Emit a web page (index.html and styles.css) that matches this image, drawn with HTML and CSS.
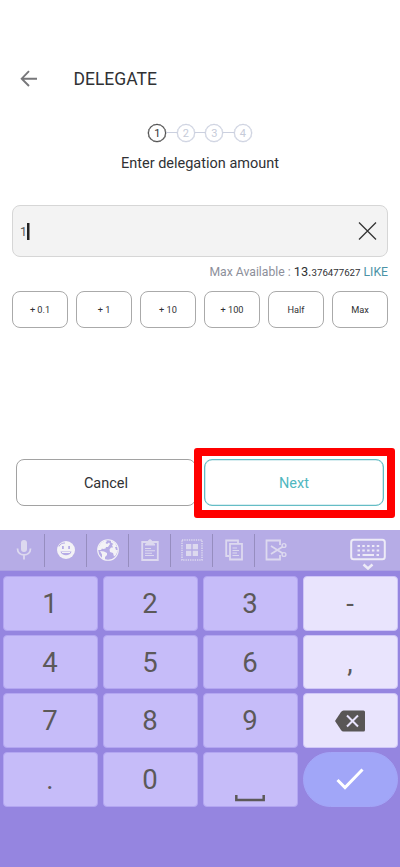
FILE: index.html
```html
<!DOCTYPE html>
<html lang="en">
<head>
<meta charset="utf-8">
<title>Delegate</title>
<link rel="stylesheet" href="styles.css">
</head>
<body>
<div class="screen">
  <header class="header">
    <svg class="back" width="18" height="18" viewBox="0 0 18 18"><path d="M17 8.700H2M9 1.200L1.700 8.700L9 16"/></svg>
    <h1>DELEGATE</h1>
  </header>
  <ol class="steps"><li class="current">1</li><li>2</li><li>3</li><li>4</li></ol>
  <p class="caption">Enter delegation amount</p>
  <main class="form">
    <div class="field">
      <span class="value">1</span><span class="caret"></span>
      <svg class="clear" width="19" height="19" viewBox="0 0 19 19"><path d="M1 .5L18 17.500M18 .5L1 17.500"/></svg>
    </div>
    <p class="available"><span class="label">Max Available :</span> <span class="whole">13.</span><span class="decimals">376477627</span> <span class="unit">LIKE</span></p>
    <div class="presets">
      <button>+ 0.1</button><button>+ 1</button><button>+ 10</button><button>+ 100</button><button>Half</button><button>Max</button>
    </div>
  </main>
  <div class="actions">
    <button class="cancel">Cancel</button>
    <button class="next">Next</button>
    <span class="highlight"></span>
  </div>
  <section class="keyboard">
    <div class="toolbar">
      <span class="tool"><svg width="22" height="22" viewBox="0 0 22 22"><rect class="solid" x="8" y="1" width="6" height="12" rx="3"/><path d="M4.500 9.500C4.500 18 17.500 18 17.500 9.500M11 16V20.500"/></svg></span>
      <span class="tool bright"><svg width="22" height="22" viewBox="0 0 22 22"><circle class="solid" cx="11" cy="11" r="9"/><path class="cut" d="M5.500 12.500H16.500C15.500 17.500 6.500 17.500 5.500 12.500Z"/><path class="solid" d="M7 13H15V14H7Z"/><rect class="cut" x="7" y="7" width="1.800" height="3"/><rect class="cut" x="13.200" y="7" width="1.800" height="3"/><path class="cutline" d="M4 7.500C5 5 7 4 10 4"/></svg></span>
      <span class="tool bright"><svg width="22" height="22" viewBox="0 0 22 22"><circle class="thin" cx="11" cy="11" r="10.300"/><path class="solid" d="M1 9L4 4L8 1.500L10 2L8.500 4L10 5L12 3.500L13 5L11 8L9 8L8.500 9.500L6 10L5 9.500L4 11L1 11ZM3 12L7 12.500L10 14L10 16L8 18L8 21L5 19L5 15.500ZM14 1.500L18 4L20 8L18 8L19 11L21 11L19 16L17 17.500L16 14L13 13L12.500 10.500L14 8.500L16 8.500L15 6L16.500 5L14 3.500Z"/></svg></span>
      <span class="tool"><svg width="18" height="22" viewBox="0 0 18 22"><path d="M1.200 3H16.800V21H1.200Z"/><path class="solid" d="M4 6.500V5L7 3V1.500L9 0L11 1.500V3L14 5V6.500Z"/><path class="thin" d="M4 9.500H10M4 11.800H14M4 14.200H11M4 16.500H13"/></svg></span>
      <span class="tool"><svg width="22" height="22" viewBox="0 0 22 22"><rect class="dotted" x="1" y="1" width="20" height="20"/><path class="solid" d="M5 5H10.300V10.300H5ZM11.700 5H17V10.300H11.700ZM5 11.700H10.300V17H5ZM11.700 11.700H17V17H11.700Z"/></svg></span>
      <span class="tool"><svg width="18" height="22" viewBox="0 0 18 22"><path d="M4 17H1.200V1.500H13V4M5 4.800H17V20.500H5Z"/><path class="thin" d="M7.500 9H12M7.500 11.500H14M7.500 14H12M7.500 16.500H14"/></svg></span>
      <span class="tool"><svg width="22" height="22" viewBox="0 0 22 22"><path d="M15 6V1.500H1.500V20.500H15V16"/><path d="M6 7L18 14.500M6 15L18 7.500"/><circle class="ring" cx="19" cy="6.500" r="1.900"/><circle class="ring" cx="19" cy="15.500" r="1.900"/></svg></span>
      <span class="hide"><svg width="36" height="32" viewBox="0 0 36 32"><rect class="frame" x="1.200" y="1.700" width="33.600" height="19.500" rx="2.500"/><path class="dots" d="M7.500 8H30M7.500 12.500H30"/><path d="M7.500 17H10M12.500 17H24M26.500 17H29"/><path class="chevron" d="M13.500 26.500L18 30.500L22.500 26.500"/></svg></span>
    </div>
    <div class="keys">
      <span class="key">1</span><span class="key">2</span><span class="key">3</span><span class="key side">-</span>
      <span class="key">4</span><span class="key">5</span><span class="key">6</span><span class="key side">,</span>
      <span class="key">7</span><span class="key">8</span><span class="key">9</span>
      <span class="key side"><svg width="30" height="22" viewBox="0 0 30 22"><path class="erase" d="M8.500 .5H28.500Q30 .5 30 2V20Q30 21.500 28.500 21.500H8.500Q7 21.500 6 20L0 11L6 2Q7 .5 8.500 .5Z"/><path class="erase-x" d="M12 5.500L23 16.500M23 5.500L12 16.500"/></svg></span>
      <span class="key">.</span><span class="key">0</span>
      <span class="key space"><svg width="30" height="7" viewBox="0 0 30 7"><path d="M1.300 0V5H28.700V0"/></svg></span>
      <span class="key enter"><svg width="28" height="22" viewBox="0 0 28 22"><path d="M1.500 12L9 19.500L26.500 1.500"/></svg></span>
    </div>
  </section>
</div>
</body>
</html>
```

FILE: styles.css
```css
* { box-sizing: border-box; }
body { margin: 0; background: #fff; font-family: Roboto, sans-serif; color: #303134; }
h1, p, ol { margin: 0; padding: 0; font-weight: 400; }
button { padding: 0; background: #fff; font: inherit; color: inherit; }
svg { display: block; flex: none; fill: none; }
.screen { display: flex; flex-direction: column; width: 400px; height: 867px; overflow: hidden; }
.header { display: flex; align-items: center; height: 40px; margin-top: 59px; padding-left: 20px; }
.back { stroke: #77777a; stroke-width: 1.9; }
.header h1 { margin-left: 35.500px; font-size: 17.500px; line-height: 20px; }
.steps { display: flex; justify-content: center; gap: 10.500px; margin-top: 25px; height: 18px; list-style: none; }
.steps li { position: relative; display: flex; align-items: center; justify-content: center; width: 18px; height: 18px; border: 1px solid #cbd0df; border-radius: 50%; box-shadow: 0 0 0 .3px #cbd0df; color: #c6cbd9; font-size: 11px; }
.steps li + li::before { content: ""; position: absolute; right: 17px; top: 7px; width: 10.500px; height: 1px; background: #cbd0df; }
.steps .current { border-color: #444; box-shadow: 0 0 0 .3px #444; color: #303134; }
.caption { margin-top: 12px; text-align: center; font-size: 14.500px; line-height: 20px; }
.form { margin: 31px 12px 0; }
.field { display: flex; align-items: center; height: 52px; padding: 0 10px 0 7px; border: 1px solid #d6d6d6; border-radius: 8px; background: #f3f3f3; }
.value { font-size: 12.500px; color: #555; }
.caret { width: 2px; height: 17px; background: #222; box-shadow: .5px 0 #222; }
.clear { margin-left: auto; stroke: #333; stroke-width: 1.300; }
.available { margin-top: 5px; height: 20px; text-align: right; font-size: 12.200px; line-height: 20px; white-space: nowrap; }
.label { color: #8d8f9a; }
.whole { font-size: 12.800px; }
.decimals { font-size: 9.700px; }
.unit { color: #4c93a6; }
.presets { display: grid; grid-template-columns: repeat(6, 56px); justify-content: space-between; margin-top: 9px; }
.presets button { height: 37px; border: 1px solid #aaa; border-radius: 8px; font-size: 9.200px; }
.actions { position: relative; display: grid; grid-template-columns: 180px 180px; gap: 8px; margin: 131px 16px 0; }
.actions button { height: 47px; padding-top: 1px; border: 1px solid #a2a2a2; border-radius: 8px; font-size: 14.500px; }
.actions .next { border-color: #65bdc5; box-shadow: inset 0 0 0 .3px #65bdc5; color: #50b7bf; }
.highlight { position: absolute; left: 178px; top: -11px; width: 201px; height: 70px; border: 8px solid #f00; border-radius: 3px; }
.keyboard { flex: 1; margin-top: 24px; background: #9585e0; }
.toolbar { display: flex; align-items: center; height: 41px; padding-left: 3px; background: #b6ace6; border-bottom: 1px solid #aba0e2; }
.tool { display: flex; align-items: center; justify-content: center; width: 42px; height: 33px; border-right: 1px solid #968dbf; stroke: #ddd9ef; stroke-width: 1.800; color: #ddd9ef; }
.tool:nth-child(7) { border: 0; }
.bright { color: #f3f2f6; stroke: #f3f2f6; }
.tool .solid { fill: currentColor; stroke: none; }
.tool .cut { fill: #b6ace6; stroke: none; }
.cutline { stroke: #b6ace6; stroke-width: 1; }
.thin { stroke-width: 1.100; }
.ring { stroke-width: 1.400; }
.dotted { stroke-dasharray: 1.300 1; stroke-width: 1.500; }
.hide { margin: 7px 14px 0 auto; stroke: #edebf7; stroke-width: 1.800; }
.frame { stroke-width: 2; }
.dots { stroke-width: 2.200; stroke-dasharray: 2.500 2.300; }
.chevron { stroke-width: 2.500; }
.keys { display: grid; grid-template-columns: repeat(4, 95px); grid-auto-rows: 54.700px; gap: 4px 5px; padding: 5px 2.500px; }
.key { display: flex; align-items: center; justify-content: center; border: 1px solid #b3a6f1; border-radius: 4px; background: #c6bcf9; color: #5c5959; font-size: 27.500px; }
.side { background: #e9e4fd; border-color: #cfc6f7; }
.erase { fill: #595656; }
.erase-x { stroke: #e9e4fd; stroke-width: 2; }
.space { align-items: flex-end; padding-bottom: 4px; stroke: #5c5959; stroke-width: 2.500; }
.enter { border-color: #a3a5f7; border-radius: 28px; background: #a1a6f8; stroke: #fff; stroke-width: 3; }
```
